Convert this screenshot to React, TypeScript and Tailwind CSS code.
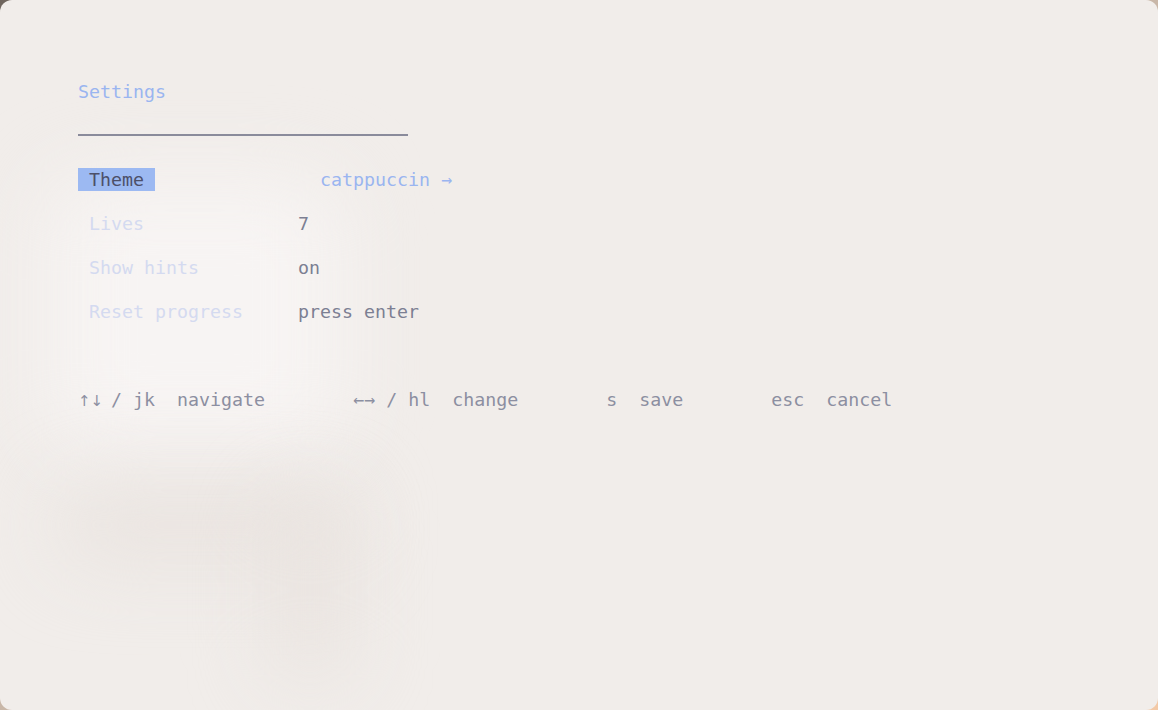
import React from 'react';

interface Row {
  label: string;
  value: string;
}

const rows: Row[] = [
  { label: 'Theme', value: 'catppuccin →' },
  { label: 'Lives', value: '7' },
  { label: 'Show hints', value: 'on' },
  { label: 'Reset progress', value: 'press enter' },
];

const hints = [
  { arrows: '↑↓', keys: ' / jk', action: 'navigate' },
  { arrows: '', keys: '←→ / hl', action: 'change' },
  { arrows: '', keys: 's', action: 'save' },
  { arrows: '', keys: 'esc', action: 'cancel' },
];

const App: React.FC = () => {
  const selected = 0;

  return (
    <div className="w-[1158px] h-[710px] bg-gradient-to-br from-[#6f655d] via-[#c9b7a8] to-[#f3c9a6]">
      <div
        className="relative w-full h-full overflow-hidden rounded-[12px] bg-[#f1edea] text-[18.3px] leading-[22px] whitespace-pre"
        style={{ fontFamily: '"DejaVu Sans Mono", "Liberation Mono", monospace' }}
      >
        {/* soft wallpaper shapes behind the frosted terminal */}
        <div className="absolute left-[50px] top-[180px] w-[290px] h-[270px] rounded-[40px] bg-[#f7f4f3] blur-2xl" />
        <div className="absolute left-[60px] top-[490px] w-[290px] h-[70px] rounded-[30px] bg-[#e9e3df] blur-2xl" />
        <div className="absolute left-[275px] top-[500px] w-[70px] h-[180px] rounded-[30px] bg-[#e9e3df] blur-2xl" />

        <div className="relative flex flex-col pl-[78px] pt-[81px]">
          <div className="h-[22px] text-[#9ab5f0]">Settings</div>
          <div className="h-[22px]" />
          <div className="h-[22px] flex items-center">
            <div className="w-[330px] h-[2px] -mt-[3px] bg-[#8a8b9b]" />
          </div>
          <div className="h-[22px]" />

          <div className="flex flex-col gap-[22px]">
            {rows.map((row, i) => (
              <div key={row.label} className="flex h-[22px]">
                <div className="w-[220px]">
                  <span
                    className={
                      i === selected
                        ? 'inline-block -mt-[1px] pt-[1px] px-[11px] bg-[#9cb9f2] text-[#4c4f69]'
                        : 'inline-block px-[11px] text-[#d4daf0]'
                    }
                  >
                    {row.label}
                  </span>
                </div>
                <span className={i === selected ? 'pl-[22px] text-[#9ab5f0]' : 'text-[#7c7f93]'}>
                  {row.value}
                </span>
              </div>
            ))}
          </div>

          <div className="h-[66px]" />

          <div className="flex h-[22px] text-[#8c8fa1]">
            {hints.map((h, i) => (
              <span key={h.action} className={i < hints.length - 1 ? 'mr-[88px]' : ''}>
                {h.arrows && (
                  // two cells wide, drawn in a taller sans face
                  <span
                    className="inline-block w-[22px] text-center text-[15px]"
                    style={{ fontFamily: '"Noto Sans", "DejaVu Sans", sans-serif' }}
                  >
                    {h.arrows}
                  </span>
                )}
                {h.keys}
                {'  '}
                {h.action}
              </span>
            ))}
          </div>
        </div>
      </div>
    </div>
  );
};

export default App;
